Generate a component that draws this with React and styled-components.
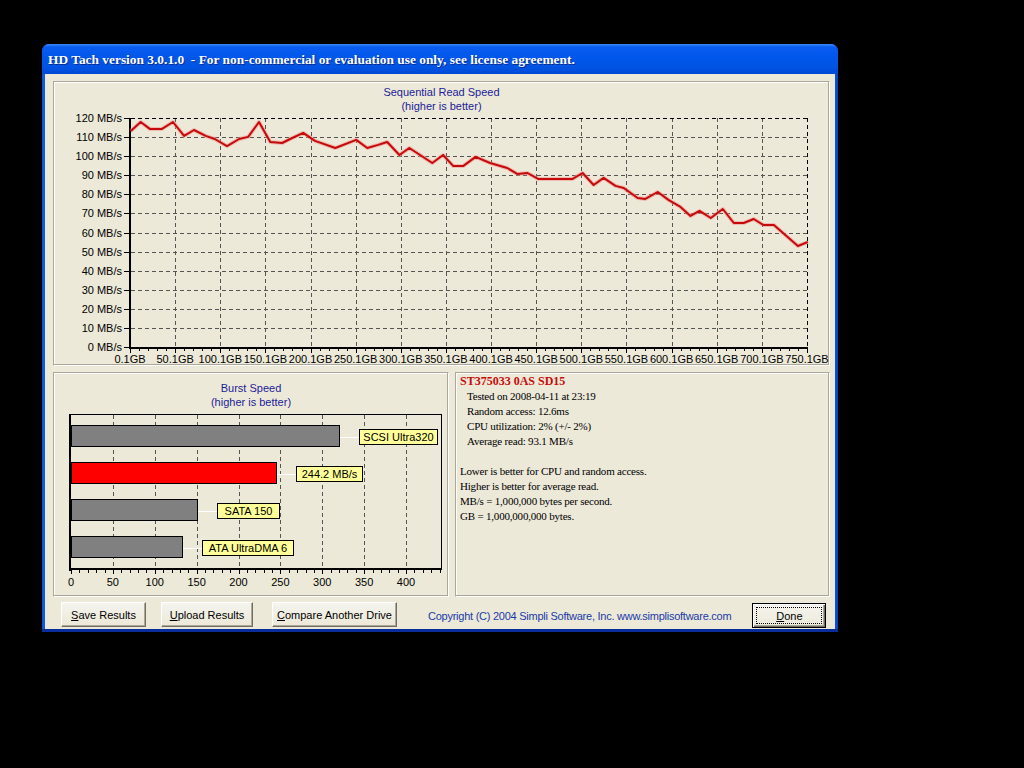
import React from 'react';
import styled, { createGlobalStyle } from 'styled-components';

// sequential read samples: [GB position, MB/s]
const seqData = [
  [1, 113.2], [12, 117.9], [22, 114.3], [35.5, 114.3], [47.7, 117.9], [60, 110.6],
  [71, 113.7], [84, 110.6], [94, 109], [107.6, 105.3], [121, 109], [131, 110.1],
  [143, 117.9], [155.5, 107.4], [168.6, 106.9], [177.5, 109], [192, 112.2], [205, 108],
  [227.5, 104.3], [250.7, 108.5], [263, 104.3], [275, 105.9], [285, 107.4], [298.5, 100.6],
  [309.5, 104.3], [335, 96.4], [347, 100.6], [358, 94.9], [369.5, 94.9], [383, 99.6],
  [399, 96.4], [418, 93.8], [429, 90.7], [440.5, 91.2], [452.7, 88], [490, 88],
  [501.5, 91.2], [513.7, 84.9], [524.8, 88.6], [538, 84.4], [547, 83.3], [562.5, 78.1],
  [571, 77.6], [584.7, 81.2], [597, 77], [610, 73.4], [621, 68.7], [631, 71.3],
  [643.5, 67.6], [656.8, 72.3], [669, 65], [680, 65], [691, 67.1], [702, 63.9],
  [713.4, 63.9], [740, 52.9], [751, 55],
];

const burstBars = [
  { value: 320, label: 'SCSI Ultra320', boxW: 78, fill: '#808080' },
  { value: 244.2, label: '244.2 MB/s', boxW: 66, fill: '#ff0000' },
  { value: 150, label: 'SATA 150', boxW: 62, fill: '#808080' },
  { value: 133, label: 'ATA UltraDMA 6', boxW: 91, fill: '#808080' },
];

const infoLines = [
  { text: 'Tested on 2008-04-11 at 23:19', indent: true },
  { text: 'Random access: 12.6ms', indent: true },
  { text: 'CPU utilization: 2% (+/- 2%)', indent: true },
  { text: 'Average read: 93.1 MB/s', indent: true },
  { text: '\u00a0' },
  { text: 'Lower is better for CPU and random access.' },
  { text: 'Higher is better for average read.' },
  { text: 'MB/s = 1,000,000 bytes per second.' },
  { text: 'GB = 1,000,000,000 bytes.' },
];

const GlobalStyle = createGlobalStyle`
  html, body {
    margin: 0;
    padding: 0;
    background: #000;
  }
  body {
    width: 1024px;
    height: 768px;
    overflow: hidden;
  }
`;

const Screen = styled.div`
  padding: 44px 0 0 42px;
`;

const Window = styled.div`
  width: 796px;
  display: flex;
  flex-direction: column;
  border-radius: 7px 7px 0 0;
  background: linear-gradient(90deg, #0a3fc8 0px, #1460e8 1px, #0b55e0 3px, #0b55e0 calc(100% - 3px), #0840c0 100%);
  border-bottom: 3px solid #0a2d9c;
`;

const TitleBar = styled.div`
  height: 30px;
  box-sizing: border-box;
  display: flex;
  align-items: center;
  padding: 2px 0 0 6px;
  border-radius: 7px 7px 0 0;
  background: linear-gradient(180deg, #3a8cf6 0px, #0a5cf0 3px, #0057ea 45%, #0053e2 80%, #0048d4 100%);
  color: #fff;
  font: bold 13.4px "Liberation Serif", serif;
  white-space: pre;
  text-shadow: 1px 1px 0 #0a2a8c;
`;

const Client = styled.div`
  margin: 0 3px;
  height: 555px;
  box-sizing: border-box;
  padding: 7px 5px 0 8px;
  background: #ece9d8;
  display: flex;
  flex-direction: column;
`;

const Groove = styled.div`
  box-sizing: border-box;
  flex-shrink: 0;
  border: 1px solid #aca899;
  border-right-color: #fff;
  border-bottom-color: #fff;
  box-shadow: inset -1px -1px 0 #aca899, inset 1px 1px 0 #fff;
`;

const ChartPanel = styled(Groove)`
  height: 285px;
  display: flex;
  flex-direction: column;
`;

const BottomRow = styled.div`
  display: flex;
  flex-shrink: 0;
  gap: 6px;
  height: 225px;
  margin-top: 6px;
`;

const BurstPanel = styled(Groove)`
  width: 396px;
  display: flex;
  flex-direction: column;
`;

const InfoPanel = styled(Groove)`
  width: 375px;
  padding: 1px 0 0 4px;
  font: 11px "Liberation Serif", serif;
  letter-spacing: -0.2px;
  line-height: 15px;
  color: #000;
`;

const ChartTitle = styled.div`
  padding-top: ${p => p.$pad}px;
  text-align: center;
  color: #1c1c98;
  font: 11px "Liberation Sans", Arial, sans-serif;
  line-height: 14px;
`;

const DriveName = styled.div`
  color: #c80a0a;
  font-weight: bold;
  font-size: 12px;
  letter-spacing: 0;
`;

const InfoLine = styled.div`
  padding-left: ${p => (p.$indent ? 7 : 0)}px;
  white-space: pre;
`;

const Footer = styled.div`
  display: flex;
  align-items: flex-start;
  flex-shrink: 0;
  height: 32px;
`;

const Button = styled.button`
  box-sizing: border-box;
  height: 25px;
  width: ${p => p.$w}px;
  margin: 5px 0 0 ${p => p.$ml}px;
  padding: 0;
  border: 1px solid;
  border-color: #fff #716f64 #716f64 #fff;
  box-shadow: inset -1px -1px 0 #aca899;
  background: linear-gradient(180deg, #f5f4ee 0%, #ece9d8 100%);
  font: 11px "Liberation Sans", Arial, sans-serif;
  color: #000;
  display: flex;
  align-items: center;
  justify-content: center;
`;

const DefaultButton = styled(Button)`
  margin-top: 6px;
  border: 1px solid #000;
  box-shadow: inset 1px 1px 0 #fff, inset -1px -1px 0 #716f64, inset -2px -2px 0 #aca899;
  padding: 3px;
`;

const FocusRect = styled.span`
  flex: 1;
  align-self: stretch;
  display: flex;
  align-items: center;
  justify-content: center;
  border: 1px dotted #000;
`;

const Copyright = styled.div`
  margin: 13px 0 0 31px;
  color: #1a3aa8;
  font: 11px "Liberation Sans", Arial, sans-serif;
  letter-spacing: -0.25px;
  white-space: nowrap;
`;

const Plot = styled.svg`
  display: block;
  font-family: "Liberation Sans", Arial, sans-serif;
  font-size: 11px;
`;

// page-pixel mapping for the sequential plot
const sx = gb => 130 + ((gb - 0.1) * 677) / 750;
const sy = mb => 347 - (mb * 229) / 120;
const crisp = v => Math.round(v) + 0.5;

function SequentialChart() {
  const levels = Array.from({ length: 13 }, (_, i) => i * 10);
  const majors = Array.from({ length: 16 }, (_, i) => i * 50 + 0.1);
  const minors = Array.from({ length: 76 }, (_, i) => i * 10 + 0.1);
  const pts = seqData.map(([g, m]) => `${sx(g).toFixed(1)},${sy(m).toFixed(1)}`).join(' ');

  return (
    <Plot width="775" height="252" viewBox="54 113 775 252">
      <g stroke="#555" strokeDasharray="4 3" shapeRendering="crispEdges">
        {levels.slice(1, 12).map(v => (
          <line key={v} x1="131" x2="807" y1={crisp(sy(v))} y2={crisp(sy(v))} />
        ))}
        {majors.slice(1, 15).map(g => (
          <line key={g} x1={crisp(sx(g))} x2={crisp(sx(g))} y1="118" y2="346" />
        ))}
      </g>
      <g stroke="#000" strokeDasharray="4 3" shapeRendering="crispEdges">
        <line x1="131" x2="807" y1="118.5" y2="118.5" />
        <line x1="807.5" x2="807.5" y1="118" y2="346" />
      </g>
      <g stroke="#000" shapeRendering="crispEdges">
        {levels.map(v => (
          <line key={v} x1="124" x2="130" y1={crisp(sy(v))} y2={crisp(sy(v))} />
        ))}
        {minors.map((g, i) => (
          <line key={g} x1={crisp(sx(g))} x2={crisp(sx(g))} y1="348" y2={i % 5 === 0 ? 353 : 351} />
        ))}
      </g>
      <rect x="129" y="118" width="2" height="231" fill="#000" shapeRendering="crispEdges" />
      <rect x="129" y="347" width="679" height="2" fill="#000" shapeRendering="crispEdges" />
      {levels.map(v => (
        <text key={v} x="122" y={Math.round(sy(v)) + 4} textAnchor="end">
          {v} MB/s
        </text>
      ))}
      {majors.map(g => (
        <text key={g} x={sx(g)} y="363" textAnchor="middle">
          {g.toFixed(1)}GB
        </text>
      ))}
      <polyline points={pts} fill="none" stroke="#f29090" strokeOpacity="0.55" strokeWidth="4" strokeLinejoin="round" />
      <polyline points={pts} fill="none" stroke="#c40a0a" strokeWidth="2" strokeLinejoin="round" />
    </Plot>
  );
}

const bx = v => 71 + v * 0.8375;

function BurstChart() {
  const grid = [50, 100, 150, 200, 250, 300, 350, 400];
  const ticks = Array.from({ length: 45 }, (_, i) => i * 10);
  const labels = [0, 50, 100, 150, 200, 250, 300, 350, 400];

  return (
    <Plot width="394" height="187" viewBox="54 409 394 187">
      <g stroke="#555" strokeDasharray="4 3" shapeRendering="crispEdges">
        {grid.map(v => (
          <line key={v} x1={crisp(bx(v))} x2={crisp(bx(v))} y1="415" y2="568" />
        ))}
      </g>
      <g stroke="#000" shapeRendering="crispEdges">
        <line x1="70" x2="442" y1="414.5" y2="414.5" />
        <line x1="441.5" x2="441.5" y1="414" y2="570" />
        {ticks.map(v => (
          <line key={v} x1={crisp(bx(v))} x2={crisp(bx(v))} y1="570" y2={v % 50 === 0 ? 574 : 573} />
        ))}
      </g>
      <rect x="69" y="414" width="2" height="157" fill="#000" shapeRendering="crispEdges" />
      <rect x="69" y="568" width="373" height="2" fill="#000" shapeRendering="crispEdges" />
      {burstBars.map((b, i) => {
        const top = 425 + i * 37;
        const end = bx(b.value);
        const boxX = Math.round(end) + 20;
        return (
          <g key={b.label} shapeRendering="crispEdges">
            <rect x="71.5" y={top + 0.5} width={end - 71} height="21" fill={b.fill} stroke="#000" />
            <line x1={end + 1} x2={boxX} y1={top + 12.5} y2={top + 12.5} stroke="#fff" />
            <rect x={boxX + 0.5} y={top + 4.5} width={b.boxW} height="15" fill="#ffff99" stroke="#000" />
            <text x={boxX + 0.5 + b.boxW / 2} y={top + 16} textAnchor="middle" shapeRendering="auto">
              {b.label}
            </text>
          </g>
        );
      })}
      {labels.map(v => (
        <text key={v} x={bx(v)} y="586" textAnchor="middle">
          {v}
        </text>
      ))}
    </Plot>
  );
}

export default function App() {
  return (
    <Screen>
      <GlobalStyle />
      <Window>
        <TitleBar>HD Tach version 3.0.1.0  - For non-commercial or evaluation use only, see license agreement.</TitleBar>
        <Client>
          <ChartPanel>
            <ChartTitle $pad={3}>
              Sequential Read Speed
              <br />
              (higher is better)
            </ChartTitle>
            <SequentialChart />
          </ChartPanel>
          <BottomRow>
            <BurstPanel>
              <ChartTitle $pad={8}>
                Burst Speed
                <br />
                (higher is better)
              </ChartTitle>
              <BurstChart />
            </BurstPanel>
            <InfoPanel>
              <DriveName>ST375033 0AS SD15</DriveName>
              {infoLines.map((l, i) => (
                <InfoLine key={i} $indent={l.indent}>
                  {l.text}
                </InfoLine>
              ))}
            </InfoPanel>
          </BottomRow>
          <Footer>
            <Button $w={85} $ml={8}>
              <u>S</u>ave Results
            </Button>
            <Button $w={92} $ml={15}>
              <u>U</u>pload Results
            </Button>
            <Button $w={125} $ml={19}>
              <u>C</u>ompare Another Drive
            </Button>
            <Copyright>Copyright (C) 2004 Simpli Software, Inc. www.simplisoftware.com</Copyright>
            <DefaultButton $w={74} $ml={21}>
              <FocusRect>
                <u>D</u>one
              </FocusRect>
            </DefaultButton>
          </Footer>
        </Client>
      </Window>
    </Screen>
  );
}
